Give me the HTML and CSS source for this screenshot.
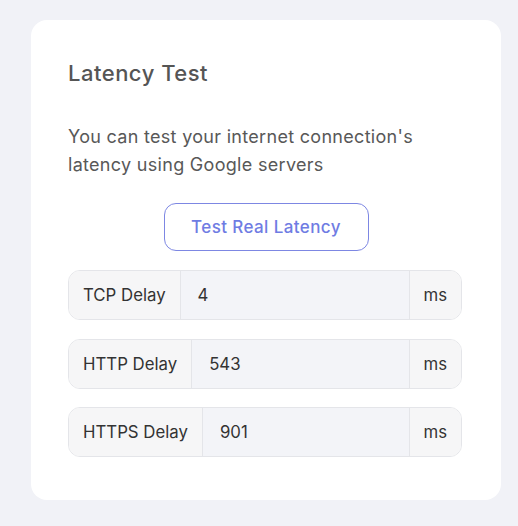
FILE: index.html
```html
<!DOCTYPE html>
<html>
<head>
<meta charset="utf-8">
<link rel="stylesheet" href="styles.css">
</head>
<body>
<div class="card">
  <h2 class="title">Latency Test</h2>
  <p class="desc">You can test your internet connection's latency using Google servers</p>
  <div class="actions"><button class="btn">Test Real Latency</button></div>
  <div class="group">
    <span class="label">TCP Delay</span>
    <span class="value">4</span>
    <span class="unit">ms</span>
  </div>
  <div class="group">
    <span class="label">HTTP Delay</span>
    <span class="value">543</span>
    <span class="unit">ms</span>
  </div>
  <div class="group">
    <span class="label">HTTPS Delay</span>
    <span class="value">901</span>
    <span class="unit">ms</span>
  </div>
</div>
</body>
</html>
```
FILE: styles.css
```css
* { box-sizing: border-box; }
html, body { margin: 0; padding: 0; }
body {
  background: #f1f2f7;
  font-family: Inter, "Noto Sans", sans-serif;
  color: #4b4b4b;
  padding: 20px 17px 26px 31px;
}
.card {
  background: #fff;
  border-radius: 16px;
  width: 470px;
  height: 480px;
  padding: 38px 39px 0 37px;
}
.title {
  margin: 0;
  font-size: 22px;
  font-weight: 500;
  line-height: 30px;
  letter-spacing: 0.5px;
  color: #555;
}
.desc {
  margin: 35px 0 0;
  font-size: 18px;
  line-height: 28px;
  letter-spacing: 0.3px;
  color: #585858;
}
.actions {
  display: flex;
  justify-content: center;
  margin-top: 24px;
  padding-left: 2px;
}
.btn {
  width: 205px;
  height: 48px;
  border: 1px solid #7d87e3;
  border-radius: 12px;
  background: #fff;
  color: #6f7ce3;
  font-family: inherit;
  font-size: 17px;
  font-weight: 500;
  letter-spacing: 0.4px;
}
.group {
  display: flex;
  height: 50px;
  margin-top: 19px;
  border: 1px solid #e4e5e9;
  border-radius: 12px;
  overflow: hidden;
  font-size: 16.8px;
  color: #333;
}
.group + .group { margin-top: 18.5px; }
.label {
  display: flex;
  align-items: center;
  padding: 0 14px 0 14px;
  background: #f6f6f7;
  border-right: 1px solid #e4e5e9;
}
.value {
  flex: 1;
  display: flex;
  align-items: center;
  padding-left: 17px;
  background: #f3f4f8;
}
.unit {
  display: flex;
  align-items: center;
  padding: 0 14px 0 13px;
  background: #f6f6f7;
  border-left: 1px solid #e4e5e9;
}
```
